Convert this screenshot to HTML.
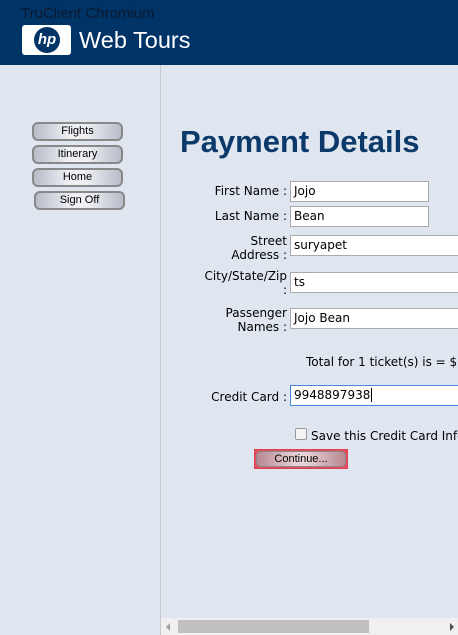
<!DOCTYPE html>
<html><head><style>
*{margin:0;padding:0;box-sizing:border-box}
body{width:458px;height:635px;overflow:hidden;background:#e0e6f0;position:relative;font-family:"DejaVu Sans",Verdana,sans-serif;font-size:12px;color:#000}
.hdr{position:absolute;left:0;top:0;width:458px;height:65px;background:#003366}
.tc{position:absolute;left:21px;top:5px;font:15px "Liberation Sans",sans-serif;color:#0a1a30}
.logo{position:absolute;left:22px;top:25px;width:49px;height:30px;background:#fff;border-radius:3px}
.logo div{position:absolute;left:12px;top:2px;width:26px;height:26px;border-radius:50%;background:#003366;color:#fff;font:italic bold 15px "Liberation Sans",sans-serif;text-align:center;line-height:25px}
.wt{position:absolute;left:79px;top:27px;font:23.5px "Liberation Sans",sans-serif;color:#fff}
.side{position:absolute;left:160px;top:65px;width:1px;height:570px;background:#c8c8c8}
.btn{position:absolute;width:91px;height:19px;border:2px solid #888;border-radius:6px;background:linear-gradient(90deg,#b8bcc8,#eef0f4 40%,#eef0f4 60%,#b8bcc8);font:11px "Liberation Sans",sans-serif;text-align:center;line-height:15px}
h1{position:absolute;left:180px;top:124px;font:bold 31px "Liberation Sans",sans-serif;color:#0b3a6a}
.l{position:absolute;right:171px;text-align:right;line-height:14px}
.i{position:absolute;height:21px;background:#fff;border:1px solid #aaa;padding:2px 3px;line-height:15px}
.sb{position:absolute;left:161px;top:618px;width:297px;height:17px;background:#f0f0f0}
</style></head><body>
<div class="hdr"><div class="tc">TruClient Chromium</div><div class="logo"><div>hp</div></div><div class="wt">Web Tours</div></div>
<div class="side"></div>
<div class="btn" style="left:32px;top:122px">Flights</div>
<div class="btn" style="left:32px;top:145px">Itinerary</div>
<div class="btn" style="left:32px;top:168px">Home</div>
<div class="btn" style="left:34px;top:191px">Sign Off</div>
<h1>Payment Details</h1>
<div class="l" style="top:184px">First Name :</div>
<div class="i" style="left:290px;top:181px;width:139px">Jojo</div>
<div class="l" style="top:209px">Last Name :</div>
<div class="i" style="left:290px;top:206px;width:139px">Bean</div>
<div class="l" style="top:234px">Street<br>Address :</div>
<div class="i" style="left:290px;top:235px;width:180px">suryapet</div>
<div class="l" style="top:269px">City/State/Zip<br>:</div>
<div class="i" style="left:290px;top:272px;width:180px">ts</div>
<div class="l" style="top:306px">Passenger<br>Names :</div>
<div class="i" style="left:290px;top:308px;width:180px">Jojo Bean</div>
<div style="position:absolute;left:306px;top:355px;white-space:nowrap">Total for 1 ticket(s) is = $</div>
<div class="l" style="top:390px">Credit Card :</div>
<div class="i" style="left:290px;top:385px;width:180px;border-color:#4a86e0">9948897938<span style="border-left:1px solid #000;margin-left:1px"></span></div>
<div style="position:absolute;left:295px;top:428px;width:12px;height:12px;border:1px solid #999;border-radius:2px;background:#f4f4f4"></div>
<div style="position:absolute;left:311px;top:429px;white-space:nowrap">Save this Credit Card Info</div>
<div style="position:absolute;left:254px;top:449px;width:94px;height:20px;border:1px solid #e04050;background:#e05060;padding:1px">
<div style="height:16px;border:1px solid #888;border-radius:5px;background:linear-gradient(90deg,#b88890,#e8d4d8 45%,#e8d4d8 55%,#b88890);font:11px 'Liberation Sans',sans-serif;text-align:center;line-height:14px">Continue...</div></div>
<div class="sb"><div style="position:absolute;left:17px;top:2px;width:191px;height:13px;background:#c0c0c0"></div>
<div style="position:absolute;left:5px;top:5px;border:4px solid transparent;border-right-color:#a0a0a0;border-left:0"></div>
<div style="position:absolute;right:4px;top:5px;border:4px solid transparent;border-left-color:#505050;border-right:0"></div></div>
</body></html>
